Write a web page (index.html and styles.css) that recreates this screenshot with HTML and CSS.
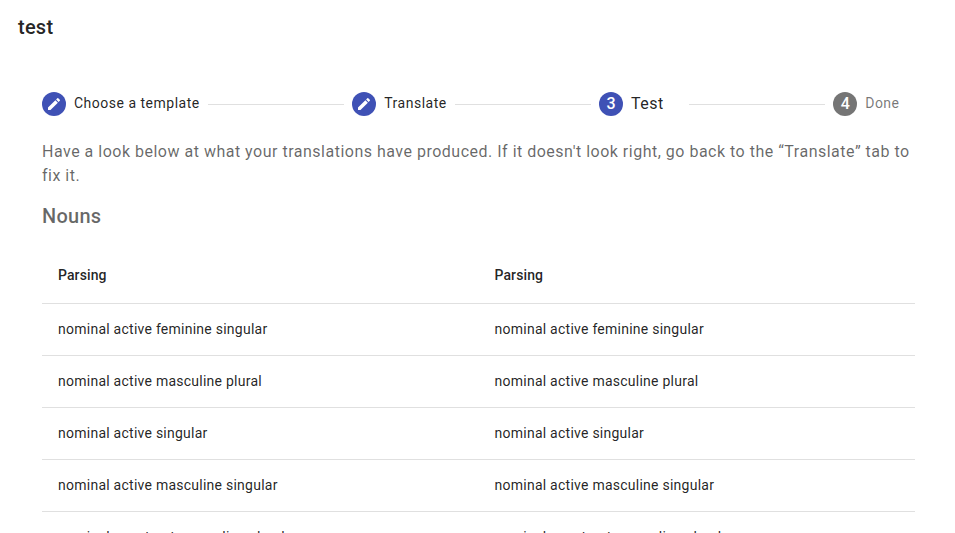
FILE: index.html
```html
<!DOCTYPE html>
<html lang="en">
<head>
<meta charset="utf-8">
<title>test</title>
<link rel="stylesheet" href="styles.css">
</head>
<body>
<h1 class="title">test</h1>
<main class="content">
  <div class="stepper">
    <div class="step"><span class="badge"><svg viewBox="0 0 24 24" width="16" height="16"><path d="M3 17.25V21h3.75L17.81 9.94l-3.75-3.75L3 17.25zM20.71 7.04a1 1 0 0 0 0-1.41l-2.34-2.34a1 1 0 0 0-1.41 0l-1.83 1.83 3.75 3.75 1.83-1.83z"/></svg></span><span class="label label-one">Choose a template</span></div>
    <div class="line"></div>
    <div class="step"><span class="badge"><svg viewBox="0 0 24 24" width="16" height="16"><path d="M3 17.25V21h3.75L17.81 9.94l-3.75-3.75L3 17.25zM20.71 7.04a1 1 0 0 0 0-1.41l-2.34-2.34a1 1 0 0 0-1.41 0l-1.83 1.83 3.75 3.75 1.83-1.83z"/></svg></span><span class="label label-two">Translate</span></div>
    <div class="line"></div>
    <div class="step"><span class="badge">3</span><span class="label label-current">Test</span></div>
    <div class="line"></div>
    <div class="step"><span class="badge badge-pending">4</span><span class="label label-pending">Done</span></div>
  </div>
  <p class="intro">Have a look below at what your translations have produced. If it doesn't look right, go back to the “Translate” tab to fix it.</p>
  <h2 class="heading">Nouns</h2>
  <table class="table">
    <thead><tr><th>Parsing</th><th>Parsing</th></tr></thead>
    <tbody>
      <tr><td>nominal active feminine singular</td><td>nominal active feminine singular</td></tr>
      <tr><td>nominal active masculine plural</td><td>nominal active masculine plural</td></tr>
      <tr><td>nominal active singular</td><td>nominal active singular</td></tr>
      <tr><td>nominal active masculine singular</td><td>nominal active masculine singular</td></tr>
      <tr><td>nominal construct masculine plural</td><td>nominal construct masculine plural</td></tr>
    </tbody>
  </table>
</main>
</body>
</html>
```
FILE: styles.css
```css
html, body { height: 100%; }
body {
  margin: 0;
  overflow: hidden;
  background: #fff;
  color: rgba(0, 0, 0, 0.87);
  font-family: Roboto, sans-serif;
}
.title {
  margin: 0;
  padding: 11px 18px 0;
  font-size: 20px;
  font-weight: 500;
  line-height: 32px;
  letter-spacing: 0.25px;
}
.content { margin: 49px 40px 0 42px; }
.stepper {
  display: flex;
  align-items: center;
  width: 857.5px;
  height: 24px;
}
.step { display: flex; align-items: center; }
.badge {
  display: flex;
  align-items: center;
  justify-content: center;
  width: 24px;
  height: 24px;
  margin-right: 8px;
  border-radius: 50%;
  background: #3f51b5;
  color: #fff;
  font-size: 16px;
  font-weight: 500;
  line-height: 24px;
}
.badge svg { fill: #fff; }
.badge-pending { background: #757575; }
.label {
  padding-bottom: 2px;
  font-size: 14px;
  letter-spacing: 0.5px;
  white-space: nowrap;
}
.label-one { width: 126px; }
.label-two { width: 62.4px; }
.label-current { width: 50px; font-size: 16px; }
.label-pending { color: rgba(0, 0, 0, 0.54); }
.line { flex: 1; height: 1px; margin: 0 8px; background: rgba(0, 0, 0, 0.12); }
.intro {
  margin: 24px 0 0;
  width: 873px;
  color: rgba(0, 0, 0, 0.6);
  font-size: 16px;
  line-height: 24px;
  letter-spacing: 0.5px;
}
.heading {
  margin: 12px 0 16px;
  color: rgba(0, 0, 0, 0.6);
  font-size: 20px;
  font-weight: 500;
  line-height: 32px;
  letter-spacing: 0.25px;
}
.table {
  width: 873px;
  border-collapse: separate;
  border-spacing: 0;
  table-layout: fixed;
  font-size: 14px;
  line-height: 20px;
}
.table th, .table td {
  box-sizing: border-box;
  height: 52px;
  padding: 0 16px 2px;
  border-bottom: 1px solid rgba(0, 0, 0, 0.12);
  text-align: left;
  letter-spacing: 0.25px;
}
.table th { height: 56px; font-weight: 500; letter-spacing: 0.1px; }
```
